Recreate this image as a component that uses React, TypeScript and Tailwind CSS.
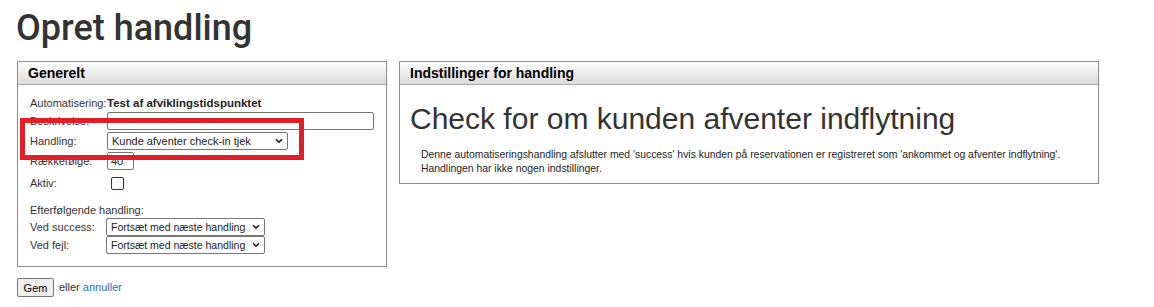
import { ChevronDown } from 'lucide-react';

const FONT = "font-['Liberation_Sans',Arial,sans-serif]";

const SelectBox = ({ value, width, size = 'text-[11px]' }: { value: string; width: string; size?: string }) => (
  <div className={`flex h-[18px] ${width} items-center justify-between gap-[2px] rounded-[2px] border border-[#767676] bg-white pl-[4px] pr-[3px] ${size} text-[#222]`}>
    <span className="whitespace-nowrap">{value}</span>
    <ChevronDown className="h-[10px] w-[10px] shrink-0 text-[#222]" strokeWidth={4} />
  </div>
);

const Panel = ({ title, width, children }: { title: string; width: string; children: React.ReactNode }) => (
  <div className={`${width} border border-[#8c8c8c] bg-white`}>
    <div className="h-[23px] border-b border-[#a9a9a9] bg-gradient-to-b from-white to-[#dcdcdc] pl-[10px] pt-[4px] text-[14px] font-bold leading-[15px] text-black">
      {title}
    </div>
    {children}
  </div>
);

const Row = ({ label, children, className = '' }: { label: string; children?: React.ReactNode; className?: string }) => (
  <div className={`flex items-center ${className}`}>
    <div className="w-[77px] shrink-0">{label}</div>
    {children}
  </div>
);

export default function App() {
  return (
    <div className={`${FONT} relative min-h-[307px] bg-white px-[17px] text-[11px] text-[#333]`}>
      <h1 className="pt-[6px] font-['Roboto',sans-serif] text-[36px] font-medium leading-[44px] text-[#333] -ml-[1px]">
        Opret handling
      </h1>

      <div className="mt-[11px] flex items-start gap-[12px]">
        <Panel title="Generelt" width="w-[370px]">
          <div className="px-[12px] pb-[12px] pt-[11px] leading-[14px]">
            <Row label="Automatisering:" className="h-[14px]">
              <span className="text-[11.5px] font-bold text-[#222]">Test af afviklingstidspunktet</span>
            </Row>
            <Row label="Beskrivelse:" className="mt-[1px] h-[20px]">
              <div className="h-[18px] w-[267px] rounded-[2px] border border-[#767676] bg-white" />
            </Row>
            <Row label="Handling:" className="h-[20px]">
              <SelectBox value="Kunde afventer check-in tjek" width="w-[181px]" />
            </Row>
            <Row label="Rækkefølge:" className="h-[20px]">
              <div className="flex h-[18px] w-[27px] items-center rounded-[2px] border border-[#767676] bg-white pl-[3px] text-[11px] text-[#222]">
                40
              </div>
            </Row>
            <Row label="Aktiv:" className="mt-[2px] h-[20px]">
              <div className="ml-[4px] h-[13px] w-[13px] rounded-[2px] border border-[#333] bg-white" />
            </Row>
            <div className="mt-[10px]">Efterfølgende handling:</div>
            <Row label="Ved success:" className="mt-[1px] h-[18px]">
              <SelectBox value="Fortsæt med næste handling" width="w-[159px] -ml-[1px]" size="text-[10.5px]" />
            </Row>
            <Row label="Ved fejl:" className="h-[18px]">
              <SelectBox value="Fortsæt med næste handling" width="w-[159px] -ml-[1px]" size="text-[10.5px]" />
            </Row>
          </div>
        </Panel>

        <Panel title="Indstillinger for handling" width="w-[700px]">
          <div className="pb-[8px] pl-[10px] pr-[4px] pt-[15px]">
            <div className="text-[30px] leading-[38px] text-[#333]">Check for om kunden afventer indflytning</div>
            <div className="mt-[10px] pl-[11px] text-[10.4px] leading-[13.5px] text-[#222]">
              Denne automatiseringshandling afslutter med 'success' hvis kunden på reservationen er registreret som 'ankommet og afventer indflytning'.
              <br />
              Handlingen har ikke nogen indstillinger.
            </div>
          </div>
        </Panel>
      </div>

      <div className="mt-[11px] flex items-center gap-[5px]">
        <button className="h-[19px] w-[37px] rounded-[2px] border border-[#767676] bg-[#efefef] text-[11px] leading-[16px] text-black">
          Gem
        </button>
        <span>
          eller <a className="text-[#2a6fb0]">annuller</a>
        </span>
      </div>

      <div className="absolute left-[20px] top-[118px] h-[42px] w-[284px] border-[5px] border-[#e21f26]" />
    </div>
  );
}
